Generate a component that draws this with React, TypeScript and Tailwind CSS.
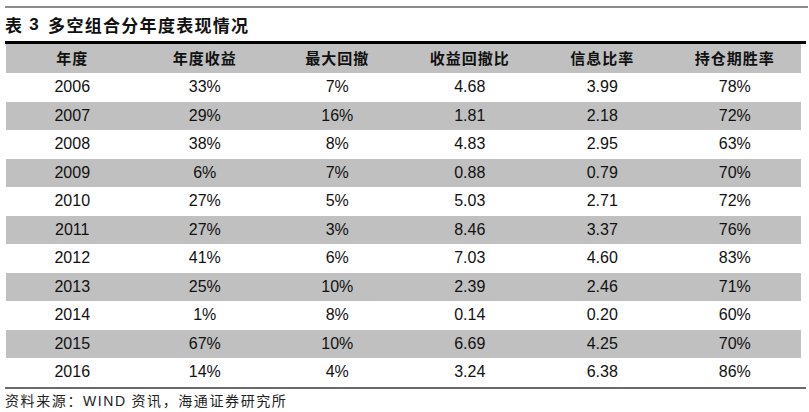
const headers = ['年度', '年度收益', '最大回撤', '收益回撤比', '信息比率', '持仓期胜率'];

const rows: string[][] = [
  ['2006', '33%', '7%', '4.68', '3.99', '78%'],
  ['2007', '29%', '16%', '1.81', '2.18', '72%'],
  ['2008', '38%', '8%', '4.83', '2.95', '63%'],
  ['2009', '6%', '7%', '0.88', '0.79', '70%'],
  ['2010', '27%', '5%', '5.03', '2.71', '72%'],
  ['2011', '27%', '3%', '8.46', '3.37', '76%'],
  ['2012', '41%', '6%', '7.03', '4.60', '83%'],
  ['2013', '25%', '10%', '2.39', '2.46', '71%'],
  ['2014', '1%', '8%', '0.14', '0.20', '60%'],
  ['2015', '67%', '10%', '6.69', '4.25', '70%'],
  ['2016', '14%', '4%', '3.24', '6.38', '86%'],
];

const cjk = { fontFamily: '"Noto Sans CJK SC", "Liberation Sans", sans-serif' };
const num = { fontFamily: '"Liberation Sans", Arial, sans-serif' };

export default function App() {
  return (
    <div className="w-[809px] h-[412px] bg-white overflow-hidden pt-[6px] text-[#111]">
      <div className="ml-[5px] w-[803px] h-[2px] bg-[#8c8c8c]" />
      <div className="h-[33px] pl-[5px] flex items-center text-[17px] font-bold tracking-[1.3px]" style={cjk}>
        <span>表</span>
        <span className="ml-[6px]" style={num}>3</span>
        <span className="ml-[8px]">多空组合分年度表现情况</span>
      </div>
      <div className="ml-[5px] w-[801px] h-[3px] bg-black" />
      <div className="ml-[6px] w-[795px]">
        <div className="grid grid-cols-6 h-[29px] bg-[#c0c0c0] items-center">
          {headers.map(h => (
            <div key={h} className="text-center text-[15px] font-bold tracking-[1px]" style={cjk}>
              {h}
            </div>
          ))}
        </div>
        {rows.map((r, i) => (
          <div
            key={r[0]}
            className={`grid grid-cols-6 h-[28.5px] items-center ${i % 2 === 1 ? 'bg-[#c0c0c0]' : 'bg-white'}`}
          >
            {r.map((c, j) => (
              <div key={j} className="text-center text-[16px]" style={num}>
                {c}
              </div>
            ))}
          </div>
        ))}
      </div>
      <div className="ml-[5px] w-[801px] h-[2px] bg-[#6a6a6a]" />
      <div className="pl-[5px] pt-[1px] text-[14px] tracking-[1.6px] text-[#222]" style={cjk}>
        资料来源：<span style={num}>WIND</span> 资讯，海通证券研究所
      </div>
    </div>
  );
}
